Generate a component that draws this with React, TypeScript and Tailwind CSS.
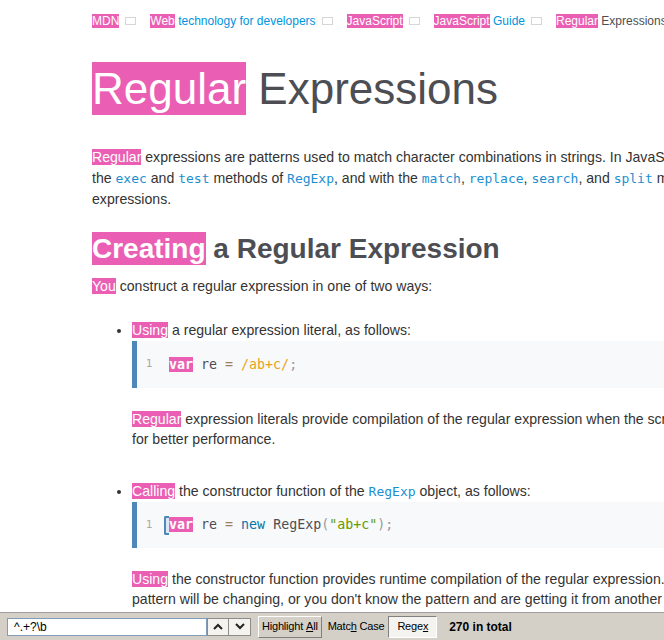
import React from "react";

const Hl = ({ children, className = "" }: { children: React.ReactNode; className?: string }) => (
  <span className={"bg-[#ea5fb3] text-white " + className}>{children}</span>
);

const Box = () => (
  <span className="inline-block w-[11px] h-[8px] border border-[#d6d6d6] mx-[6px] mr-[14px] align-middle relative -top-[1px]" />
);

const Code = ({ children }: { children: React.ReactNode }) => (
  <span className="font-['DejaVu_Sans_Mono',monospace] text-[13px] text-[#1b8fd2]">{children}</span>
);

const Chevron = ({ up }: { up?: boolean }) => (
  <svg width="10" height="7" viewBox="0 0 10 7">
    <path d={up ? "M1 6 L5 2 L9 6" : "M1 1 L5 5 L9 1"} fill="none" stroke="#222" strokeWidth="2" />
  </svg>
);

const App = () => {
  return (
    <div className="w-[664px] h-[640px] overflow-hidden bg-white flex flex-col font-['Liberation_Sans',Arial,sans-serif]">
      <div className="flex-1 overflow-hidden pl-[92px] text-[#333] whitespace-nowrap">
        {/* breadcrumb */}
        <div className="pt-[13px] leading-[16px] text-[12px] text-[#0095dd]">
          <Hl>MDN</Hl>
          <Box />
          <Hl>Web</Hl> technology for developers
          <Box />
          <Hl>JavaScript</Hl>
          <Box />
          <Hl>JavaScript</Hl> Guide
          <Box />
          <Hl>Regular</Hl> <span className="text-[#4d4e53]">Expressions</span>
        </div>

        <h1 className="mt-[32px] leading-[56px] text-[44px] text-[#4d4e53]">
          <Hl className="py-[2px]">Regular</Hl> Expressions
        </h1>

        <div className="mt-[30px] text-[14.1px] leading-[21px]">
          <div>
            <Hl>Regular</Hl> expressions are patterns used to match character combinations in strings. In JavaScript, regular expressions are also objects. These patterns are used with
          </div>
          <div>
            the <Code>exec</Code> and <Code>test</Code> methods of <Code>RegExp</Code>, and with the <Code>match</Code>, <Code>replace</Code>, <Code>search</Code>, and <Code>split</Code> methods of <Code>String</Code>. This chapter describes JavaScript regular
          </div>
          <div>expressions.</div>
        </div>

        <h2 className="mt-[21px] leading-[36px] text-[28px] font-bold text-[#4d4e53]">
          <Hl className="py-[1px]">Creating</Hl> a Regular Expression
        </h2>

        <p className="mt-[9px] text-[14.1px] leading-[21px]">
          <Hl>You</Hl> construct a regular expression in one of two ways:
        </p>

        <ul className="list-disc pl-[40px] mt-[23px] text-[14.1px] marker:text-[#333]">
          <li>
            <div className="leading-[21px]">
              <Hl>Using</Hl> a regular expression literal, as follows:
            </div>
            <div className="h-[47px] flex items-center bg-[#f8f9fa] border-l-[5px] border-[#4d88b8] pl-[8px] font-['DejaVu_Sans_Mono',monospace] text-[13.3px] text-[#4d4e53]">
              <span className="w-[8px] text-[11px] text-[#aaa] text-center">1</span>
              <span className="ml-[16px]">
                <Hl className="font-bold">var</Hl> re <span className="text-[#a67f59]">=</span>{" "}
                <span className="text-[#e9a21a]">/ab+c/</span>
                <span className="text-[#999]">;</span>
              </span>
            </div>
            <div className="mt-[21px] leading-[20px]">
              <div>
                <Hl>Regular</Hl> expression literals provide compilation of the regular expression when the script is loaded. When the regular expression will remain constant, use this
              </div>
              <div>for better performance.</div>
            </div>
          </li>
          <li className="mt-[32px]">
            <div className="leading-[21px]">
              <Hl>Calling</Hl> the constructor function of the <Code>RegExp</Code> object, as follows:
            </div>
            <div className="h-[46px] flex items-center bg-[#f8f9fa] border-l-[5px] border-[#4d88b8] pl-[8px] font-['DejaVu_Sans_Mono',monospace] text-[13.3px] text-[#4d4e53]">
              <span className="w-[8px] text-[11px] text-[#aaa] text-center">1</span>
              <span className="ml-[11px] inline-block w-[5px] h-[19px] border-l-[2px] border-y-[2px] border-[#4d88b8] rounded-l-[2px] bg-[#dbe7f2]" />
              <span>
                <Hl className="font-bold">var</Hl> re <span className="text-[#a67f59]">=</span>{" "}
                <span className="text-[#0077aa]">new</span> RegExp<span className="text-[#999]">(</span>
                <span className="text-[#669900]">"ab+c"</span>
                <span className="text-[#999]">);</span>
              </span>
            </div>
            <div className="mt-[21px] leading-[20px]">
              <div>
                <Hl>Using</Hl> the constructor function provides runtime compilation of the regular expression. Use the constructor function when you know the regular expression
              </div>
              <div>pattern will be changing, or you don't know the pattern and are getting it from another source, such as user input.</div>
            </div>
          </li>
        </ul>
      </div>

      {/* find bar */}
      <div className="h-[28px] shrink-0 bg-[#d4d0c8] border-t border-[#a0a0a0] flex items-center pl-[7px] text-[11px] text-black whitespace-nowrap">
        <div className="w-[200px] h-[18px] bg-white border border-[#7f9db9] flex items-center pl-[6px] text-[12px]">
          ^.+?\b
        </div>
        <div className="w-[22px] h-[18px] bg-[#f4f3ee] border border-[#8c8c8c] flex items-center justify-center">
          <Chevron up />
        </div>
        <div className="w-[22px] h-[18px] bg-[#f4f3ee] border border-l-0 border-[#8c8c8c] flex items-center justify-center">
          <Chevron />
        </div>
        <div className="ml-[7px] h-[22px] px-[3px] flex items-center border border-t-white border-l-white border-r-[#808080] border-b-[#808080] tracking-[-0.2px]">
          Highlight <span className="ml-[3px] underline">A</span>ll
        </div>
        <div className="ml-[4px] px-[2px] tracking-[-0.2px]">
          Matc<span className="underline">h</span> Case
        </div>
        <div className="ml-[2px] h-[22px] px-[8px] flex items-center bg-[#f4f3ef] border border-t-[#808080] border-l-[#808080] border-r-white border-b-white tracking-[-0.2px]">
          Rege<span className="underline">x</span>
        </div>
        <div className="ml-[12px] text-[12px] font-bold">270 in total</div>
      </div>
    </div>
  );
};

export default App;
